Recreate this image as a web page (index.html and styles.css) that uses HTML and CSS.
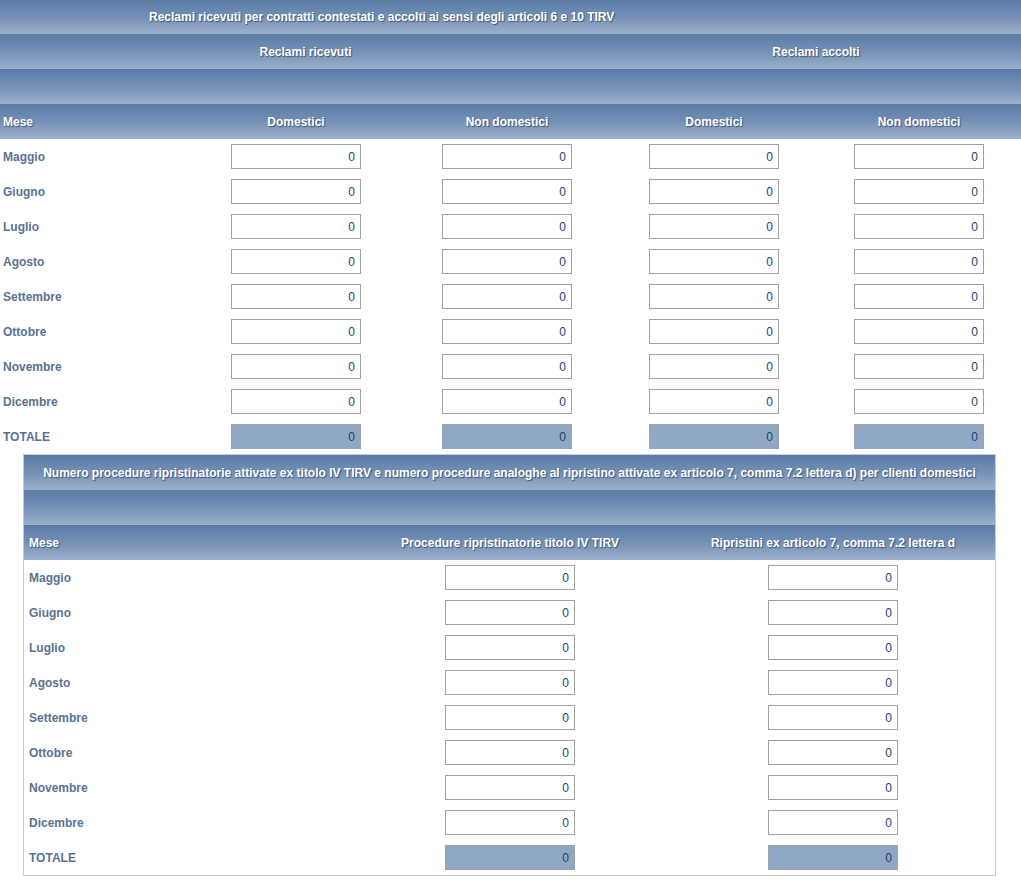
FILE: index.html
```html
<!DOCTYPE html>
<html lang="it">
<head>
<meta charset="utf-8">
<title>Reclami</title>
<link rel="stylesheet" href="styles.css">
</head>
<body>
<div class="t1">
  <div class="h full title">Reclami ricevuti per contratti contestati e accolti ai sensi degli articoli 6 e 10 TIRV</div>
  <div class="h span-a c">Reclami ricevuti</div>
  <div class="h span-b c">Reclami accolti</div>
  <div class="h full"></div>
  <div class="h l">Mese</div>
  <div class="h c">Domestici</div>
  <div class="h c">Non domestici</div>
  <div class="h c">Domestici</div>
  <div class="h c">Non domestici</div>

  <div class="lab">Maggio</div>
  <div class="cell"><input value="0"></div><div class="cell"><input value="0"></div><div class="cell"><input value="0"></div><div class="cell"><input value="0"></div>
  <div class="lab">Giugno</div>
  <div class="cell"><input value="0"></div><div class="cell"><input value="0"></div><div class="cell"><input value="0"></div><div class="cell"><input value="0"></div>
  <div class="lab">Luglio</div>
  <div class="cell"><input value="0"></div><div class="cell"><input value="0"></div><div class="cell"><input value="0"></div><div class="cell"><input value="0"></div>
  <div class="lab">Agosto</div>
  <div class="cell"><input value="0"></div><div class="cell"><input value="0"></div><div class="cell"><input value="0"></div><div class="cell"><input value="0"></div>
  <div class="lab">Settembre</div>
  <div class="cell"><input value="0"></div><div class="cell"><input value="0"></div><div class="cell"><input value="0"></div><div class="cell"><input value="0"></div>
  <div class="lab">Ottobre</div>
  <div class="cell"><input value="0"></div><div class="cell"><input value="0"></div><div class="cell"><input value="0"></div><div class="cell"><input value="0"></div>
  <div class="lab">Novembre</div>
  <div class="cell"><input value="0"></div><div class="cell"><input value="0"></div><div class="cell"><input value="0"></div><div class="cell"><input value="0"></div>
  <div class="lab">Dicembre</div>
  <div class="cell"><input value="0"></div><div class="cell"><input value="0"></div><div class="cell"><input value="0"></div><div class="cell"><input value="0"></div>
  <div class="lab">TOTALE</div>
  <div class="cell"><input class="tot" value="0" readonly></div><div class="cell"><input class="tot" value="0" readonly></div><div class="cell"><input class="tot" value="0" readonly></div><div class="cell"><input class="tot" value="0" readonly></div>
</div>

<div class="t2">
  <div class="h full c">Numero procedure ripristinatorie attivate ex titolo IV TIRV e numero procedure analoghe al ripristino attivate ex articolo 7, comma 7.2 lettera d) per clienti domestici</div>
  <div class="h full"></div>
  <div class="h l2">Mese</div>
  <div class="h c">Procedure ripristinatorie titolo IV TIRV</div>
  <div class="h c">Ripristini ex articolo 7, comma 7.2 lettera d</div>

  <div class="lab l2">Maggio</div>
  <div class="cell"><input value="0"></div><div class="cell"><input value="0"></div>
  <div class="lab l2">Giugno</div>
  <div class="cell"><input value="0"></div><div class="cell"><input value="0"></div>
  <div class="lab l2">Luglio</div>
  <div class="cell"><input value="0"></div><div class="cell"><input value="0"></div>
  <div class="lab l2">Agosto</div>
  <div class="cell"><input value="0"></div><div class="cell"><input value="0"></div>
  <div class="lab l2">Settembre</div>
  <div class="cell"><input value="0"></div><div class="cell"><input value="0"></div>
  <div class="lab l2">Ottobre</div>
  <div class="cell"><input value="0"></div><div class="cell"><input value="0"></div>
  <div class="lab l2">Novembre</div>
  <div class="cell"><input value="0"></div><div class="cell"><input value="0"></div>
  <div class="lab l2">Dicembre</div>
  <div class="cell"><input value="0"></div><div class="cell"><input value="0"></div>
  <div class="lab l2">TOTALE</div>
  <div class="cell"><input class="tot" value="0" readonly></div><div class="cell"><input class="tot" value="0" readonly></div>
</div>
</body>
</html>
```

FILE: styles.css
```css
html, body {
  margin: 0;
  padding: 0;
  background: #ffffff;
  font-family: "Liberation Sans", Arial, sans-serif;
  font-size: 12px;
}

.t1 {
  display: grid;
  grid-template-columns: 189px 214px 208px 206px 204px;
  grid-template-rows: 34px;
  grid-auto-rows: 35px;
  width: 1021px;
}

.t2 {
  display: grid;
  grid-template-columns: 325px 322px 324px;
  grid-auto-rows: 35px;
  width: 971px;
  margin-left: 23px;
  border: 1px solid #cccccc;
}

.h {
  background: linear-gradient(to bottom, #5a7ba6 0%, #7590b6 50%, #9db1cb 100%);
  color: #ffffff;
  font-weight: bold;
  text-shadow: 1px 1px 1px #3d5374;
  display: flex;
  align-items: center;
  white-space: nowrap;
}

.full { grid-column: 1 / -1; }
.span-a { grid-column: 1 / 4; }
.span-b { grid-column: 4 / 6; }

.title {
  padding-left: 149px;
}

.c { justify-content: center; }
.l { padding-left: 3px; }
.l2 { padding-left: 5px; }

.lab {
  display: flex;
  align-items: center;
  color: #5b7193;
  font-weight: bold;
  padding-left: 3px;
}
.lab.l2 { padding-left: 5px; }

.cell {
  display: flex;
  align-items: center;
  justify-content: center;
}

input {
  box-sizing: border-box;
  width: 130px;
  height: 25px;
  margin: 0;
  border: 1px solid #a0a0a0;
  background: #ffffff;
  text-align: right;
  padding: 0 5px 0 2px;
  font-family: "Liberation Sans", Arial, sans-serif;
  font-size: 12px;
  color: #1c3f72;
}

input.tot {
  background: #91a8c5;
  border-color: #9aa3ae;
}
```
